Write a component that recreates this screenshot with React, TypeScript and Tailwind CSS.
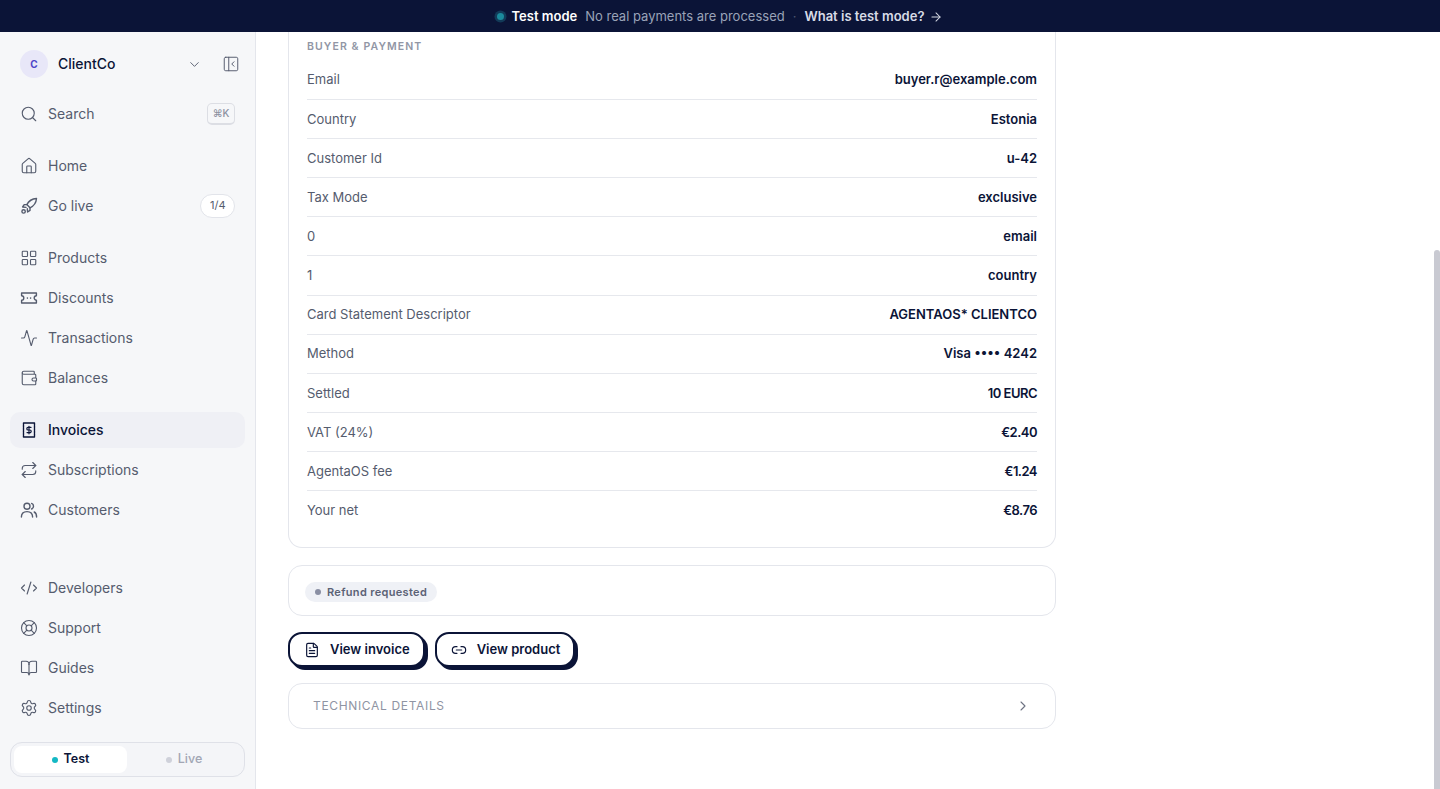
import { ReactNode } from "react";
import {
  Activity,
  ArrowRight,
  BookOpen,
  ChevronDown,
  ChevronRight,
  CodeXml,
  FileText,
  House,
  LayoutGrid,
  LifeBuoy,
  Link2,
  PanelLeftClose,
  Repeat,
  Search,
  Settings,
  Wallet,
} from "lucide-react";

const iconProps = { size: 18, strokeWidth: 1.5 };

const Glyph = ({ children }: { children: ReactNode }) => (
  <svg width="18" height="18" viewBox="0 0 18 18" fill="none" stroke="currentColor" strokeWidth="1.4" strokeLinejoin="round" strokeLinecap="round">
    {children}
  </svg>
);

const RocketIcon = () => (
  <Glyph>
    <path d="M16.5 1.5 C12 1.8 8.7 4 6.8 7.6 L10 10.8 C13.8 9 16.2 5.8 16.5 1.5 Z" />
    <path d="M6.8 7.6 H4.2 L2.6 10 L6 10.4 M10 10.8 V13.4 L7.6 15 L7.3 11.8" />
    <circle cx="3.6" cy="14.4" r="1.7" />
  </Glyph>
);

const TicketIcon = () => (
  <Glyph>
    <path d="M1.6 4 H16.4 V6.8 a2.2 2.2 0 0 0 0 4.4 V14 H1.6 V11.2 a2.2 2.2 0 0 0 0 -4.4 Z" />
    <path d="M7.4 9 v0.1 M10.6 9 v0.1" strokeWidth="1.6" />
  </Glyph>
);

const InvoiceIcon = () => (
  <Glyph>
    <path d="M3.5 2 H14.5 V16 H3.5 Z" strokeDasharray="2.2 0.5" />
    <path d="M11 6.4 H8.1 a1.3 1.3 0 0 0 0 2.6 h1.8 a1.3 1.3 0 0 1 0 2.6 H7 M9 5.2 v7.6" strokeWidth="1.15" />
  </Glyph>
);

const UsersIcon = () => (
  <Glyph>
    <circle cx="7" cy="5.2" r="3" />
    <path d="M1.4 16 c0 -3.6 2.4 -5.4 5.6 -5.4 s5.6 1.8 5.6 5.4" />
    <path d="M11.6 2.4 a3 3 0 0 1 0 5.6 M14.2 11 c1.6 0.8 2.4 2.6 2.4 5" />
  </Glyph>
);

const NavItem = ({ icon, label, active, right }: { icon: ReactNode; label: string; active?: boolean; right?: ReactNode }) => (
  <div className={`flex h-9 items-center gap-[10px] rounded-[10px] px-[10px] text-sm ${active ? "bg-[#eff0f5] font-medium text-[#0b1437]" : "text-[#555c6e]"}`}>
    {icon}
    <span className="flex-1">{label}</span>
    {right}
  </div>
);

const Sidebar = () => (
  <aside className="flex w-[256px] shrink-0 flex-col border-r border-[#e4e6ec] bg-[#f6f7f9] px-[10px] pb-3 pt-[18px]">
    <div className="flex h-7 items-center pl-[10px] pr-[5px]">
      <div className="flex size-7 items-center justify-center rounded-full bg-[#e8e7f8] text-[10px] font-bold text-[#4f46c8]">C</div>
      <span className="ml-[10px] flex-1 text-sm font-medium text-[#0b1437]">ClientCo</span>
      <ChevronDown size={15} strokeWidth={1.5} className="mr-[20px] text-[#555c6e]" />
      <PanelLeftClose size={18} strokeWidth={1.3} className="text-[#555c6e]" />
    </div>
    <div className="mt-[18px]">
      <NavItem
        icon={<Search {...iconProps} />}
        label="Search"
        right={
          <span className="rounded-[5px] border border-b-2 border-[#dcdee4] bg-[#f6f7f9] px-[4.5px] py-[2px] text-[10px] font-medium text-[#8b90a0]">⌘K</span>
        }
      />
    </div>
    <div className="mt-4 flex flex-col gap-1">
      <NavItem icon={<House {...iconProps} />} label="Home" />
      <NavItem
        icon={<RocketIcon />}
        label="Go live"
        right={<span className="rounded-full border border-[#e2e4ea] bg-white px-[8.5px] py-[3px] text-[11px] text-[#555c6e]">1/4</span>}
      />
    </div>
    <div className="mt-4 flex flex-col gap-1">
      <NavItem icon={<LayoutGrid {...iconProps} />} label="Products" />
      <NavItem icon={<TicketIcon />} label="Discounts" />
      <NavItem icon={<Activity {...iconProps} />} label="Transactions" />
      <NavItem icon={<Wallet {...iconProps} />} label="Balances" />
    </div>
    <div className="mt-4 flex flex-col gap-1">
      <NavItem icon={<InvoiceIcon />} label="Invoices" active />
      <NavItem icon={<Repeat {...iconProps} />} label="Subscriptions" />
      <NavItem icon={<UsersIcon />} label="Customers" />
    </div>
    <div className="mt-auto flex flex-col gap-1">
      <NavItem icon={<CodeXml {...iconProps} />} label="Developers" />
      <NavItem icon={<LifeBuoy {...iconProps} />} label="Support" />
      <NavItem icon={<BookOpen {...iconProps} />} label="Guides" />
      <NavItem icon={<Settings {...iconProps} />} label="Settings" />
    </div>
    <div className="mt-4 flex h-[35px] items-center rounded-xl border border-[#dfe1e8] bg-[#f4f5f8] p-[3px]">
      <div className="flex h-full w-[113px] items-center justify-center gap-[6px] rounded-lg bg-white text-[12.5px] font-semibold text-[#0b1437]">
        <span className="size-[6px] rounded-full bg-[#14b8c4]" />
        Test
      </div>
      <div className="flex h-full flex-1 items-center justify-center gap-[6px] text-[12.5px] font-medium text-[#a2a6b4]">
        <span className="size-[6px] rounded-full bg-[#cfd1da]" />
        Live
      </div>
    </div>
  </aside>
);

const rows = [
  ["Email", "buyer.r@example.com"],
  ["Country", "Estonia"],
  ["Customer Id", "u-42"],
  ["Tax Mode", "exclusive"],
  ["0", "email"],
  ["1", "country"],
  ["Card Statement Descriptor", "AGENTAOS* CLIENTCO"],
  ["Method", "Visa •••• 4242"],
  ["Settled", "10 EURC"],
  ["VAT (24%)", "€2.40"],
  ["AgentaOS fee", "€1.24"],
  ["Your net", "€8.76"],
];

const ActionButton = ({ icon, label }: { icon: ReactNode; label: string }) => (
  <button className="flex h-[35px] items-center gap-[10px] rounded-[14px] border-2 border-[#0b1437] bg-white pl-[14px] pr-[13px] text-[13px] font-semibold text-[#0b1437] shadow-[3px_3px_0_#0b1437]">
    {icon}
    {label}
  </button>
);

const Details = () => (
  <main className="relative flex-1 overflow-hidden bg-white">
    <div className="ml-8 flex w-[768px] flex-col">
      <section className="rounded-b-[14px] border border-t-0 border-[#e4e6ec] px-[18px] pb-[17px] pt-[9px]">
        <h3 className="mb-[5px] h-[15px] text-[10.5px] font-semibold uppercase leading-[11px] tracking-[0.105em] text-[#9196a5]">Buyer &amp; Payment</h3>
        {rows.map(([label, value], i) => (
          <div key={label} className={`flex h-[39.1px] items-center justify-between text-[13px] ${i > 0 ? "pt-px" : ""} ${i < rows.length - 1 ? "border-b border-[#e6e8ed]" : ""}`}>
            <span className="text-[#555c6e]">{label}</span>
            <span className={`font-semibold text-[#0b1437] ${i >= 8 ? "tracking-[-0.04em]" : ""}`}>{value}</span>
          </div>
        ))}
      </section>
      <section className="mt-[17px] flex h-[51px] items-start rounded-[14px] border border-[#e4e6ec] px-4 pt-[16px]">
        <span className="flex h-5 items-center gap-[6px] rounded-full bg-[#eff1f6] px-[10px] text-[11px] font-semibold tracking-[0.03em] text-[#5b6275]">
          <span className="size-[6px] rounded-full bg-[#8a8fa3]" />
          Refund requested
        </span>
      </section>
      <div className="mt-4 flex gap-[10px]">
        <ActionButton icon={<FileText size={16} strokeWidth={1.75} />} label="View invoice" />
        <ActionButton icon={<Link2 size={16} strokeWidth={1.75} />} label="View product" />
      </div>
      <section className="mt-4 flex h-[46px] items-center justify-between rounded-[14px] border border-[#e4e6ec] pl-6 pr-6">
        <span className="text-xs font-normal uppercase tracking-[0.055em] text-[#8f94a3]">Technical details</span>
        <ChevronRight size={16} strokeWidth={1.6} className="text-[#6d7282]" />
      </section>
    </div>
    <div className="absolute bottom-0 right-0 top-[218px] w-[6px] rounded-t-full bg-[#c9cad2]" />
  </main>
);

export default function App() {
  return (
    <div className="flex h-screen flex-col overflow-hidden font-['Inter',sans-serif]">
      <div className="flex h-8 shrink-0 items-center justify-center bg-[#0b1437] pt-px text-[13px]">
        <span className="mr-2 size-[7px] rounded-full bg-[#1b8a9c] shadow-[0_0_0_2.5px_#123a58]" />
        <span className="font-semibold text-white">Test mode</span>
        <span className="ml-2 text-[#9aa3b8]">No real payments are processed</span>
        <span className="mx-[8px] text-[#4d5672]">·</span>
        <span className="font-semibold text-[#d7dbe6]">What is test mode?</span>
        <ArrowRight size={14} strokeWidth={1.75} className="ml-[5px] text-[#d7dbe6]" />
      </div>
      <div className="flex min-h-0 flex-1">
        <Sidebar />
        <Details />
      </div>
    </div>
  );
}
